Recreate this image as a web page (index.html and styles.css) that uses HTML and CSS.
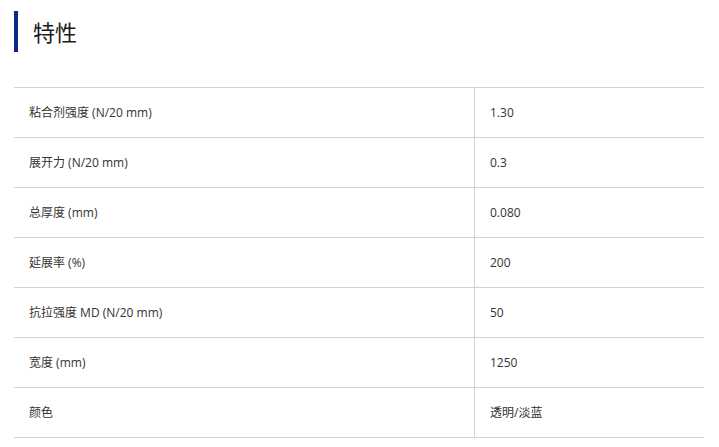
FILE: index.html
```html
<!DOCTYPE html>
<html lang="zh">
<head>
<meta charset="utf-8">
<link rel="stylesheet" href="styles.css">
</head>
<body>
<div class="page">
  <h2 class="title">特性</h2>
  <table class="spec">
    <tr><td class="k">粘合剂强度 (N/20 mm)</td><td class="v">1.30</td></tr>
    <tr><td class="k">展开力 (N/20 mm)</td><td class="v">0.3</td></tr>
    <tr><td class="k">总厚度 (mm)</td><td class="v">0.080</td></tr>
    <tr><td class="k">延展率 (%)</td><td class="v">200</td></tr>
    <tr><td class="k">抗拉强度 MD (N/20 mm)</td><td class="v">50</td></tr>
    <tr><td class="k">宽度 (mm)</td><td class="v">1250</td></tr>
    <tr><td class="k">颜色</td><td class="v">透明/淡蓝</td></tr>
  </table>
</div>
</body>
</html>
```

FILE: styles.css
```css
html, body {
  margin: 0;
  padding: 0;
  background: #fff;
}
.page {
  padding: 11px 15px 0 14px;
  font-family: "Open Sans", "Noto Sans CJK SC", sans-serif;
  color: #333;
}
.title {
  margin: 0;
  height: 41px;
  border-left: 4px solid #0c2a8c;
  padding-left: 15px;
  font-family: "Noto Sans CJK SC", sans-serif;
  font-size: 22px;
  font-weight: 400;
  line-height: 41px;
  color: #1a1a1a;
}
.spec {
  margin-top: 35px;
  width: 100%;
  border-collapse: collapse;
  font-size: 12px;
}
.spec td {
  height: 48px;
  padding: 0 0 1px 15px;
  border-top: 1px solid #d2d2d2;
  border-bottom: 1px solid #d2d2d2;
  vertical-align: middle;
}
.spec td.k {
  width: 445px;
  border-right: 1px solid #d2d2d2;
}
```
